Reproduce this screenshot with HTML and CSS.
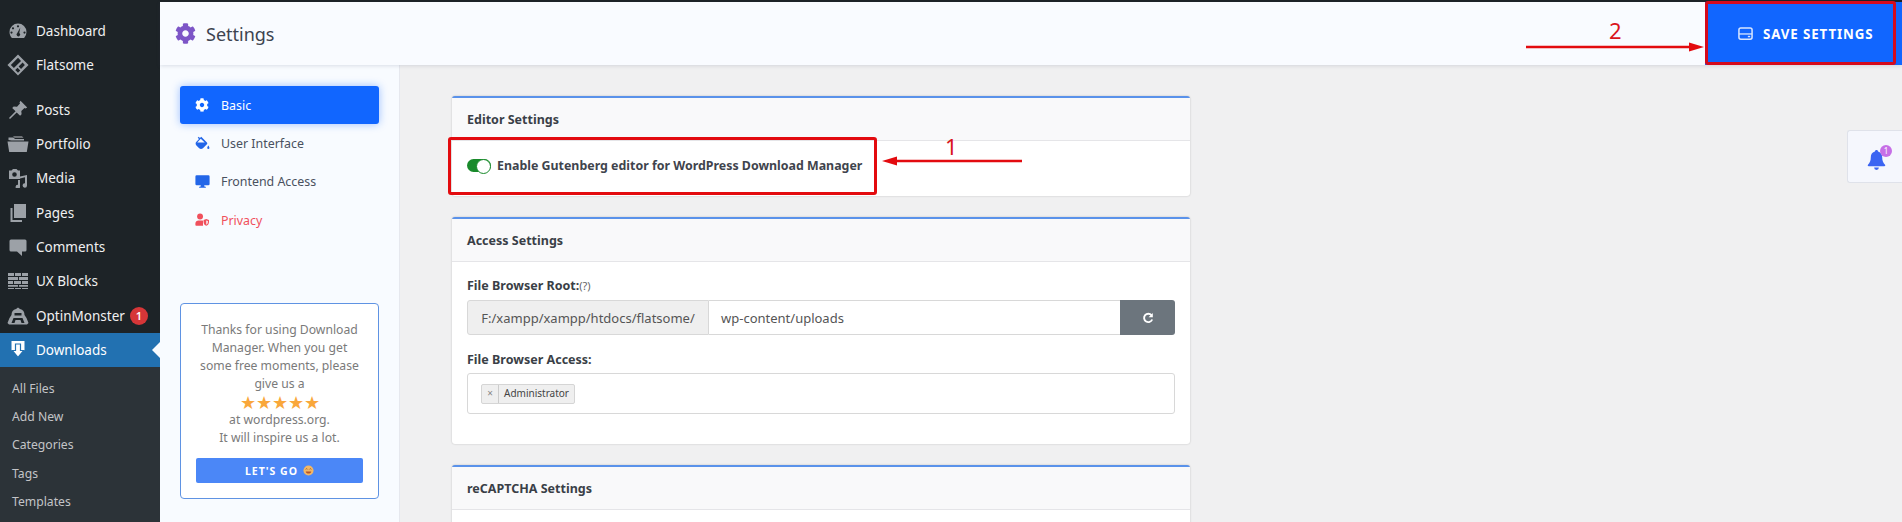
FILE: index.html
```html
<!DOCTYPE html>
<html lang="en">
<head>
<meta charset="utf-8">
<title>Settings</title>
<link rel="stylesheet" href="styles.css">
</head>
<body>
<svg class="sprites" aria-hidden="true">
  <symbol id="cog" viewBox="0 0 512 512"><path d="M487.4 315.7l-42.6-24.6c4.3-23.2 4.3-47 0-70.2l42.6-24.6c4.9-2.8 7.1-8.6 5.5-14-11.1-35.6-30-67.8-54.7-94.6-3.8-4.1-10-5.1-14.8-2.3L380.8 110c-17.9-15.4-38.5-27.3-60.8-35.1V25.8c0-5.6-3.9-10.5-9.4-11.7-36.7-8.2-74.3-7.8-109.2 0-5.5 1.2-9.4 6.1-9.4 11.7V75c-22.2 7.9-42.8 19.8-60.8 35.1L88.7 85.5c-4.9-2.8-11-1.9-14.8 2.3-24.7 26.7-43.6 58.9-54.7 94.6-1.7 5.4.6 11.2 5.5 14L67.3 221c-4.3 23.2-4.3 47 0 70.2l-42.6 24.6c-4.9 2.8-7.1 8.6-5.5 14 11.1 35.6 30 67.8 54.7 94.6 3.8 4.1 10 5.1 14.8 2.3l42.6-24.6c17.9 15.4 38.5 27.3 60.8 35.1v49.2c0 5.6 3.9 10.5 9.4 11.7 36.7 8.2 74.3 7.8 109.2 0 5.5-1.2 9.4-6.1 9.4-11.7v-49.2c22.2-7.9 42.8-19.8 60.8-35.1l42.6 24.6c4.9 2.8 11 1.9 14.8-2.3 24.7-26.7 43.6-58.9 54.7-94.6 1.5-5.5-.7-11.3-5.6-14.1zM256 336c-44.1 0-80-35.9-80-80s35.9-80 80-80 80 35.9 80 80-35.9 80-80 80z"/></symbol>
</svg>

<div class="topline"></div>
<div class="page">
  <nav class="adminmenu">
    <a class="menu-item"><svg class="menu-icon" viewBox="0 0 20 20"><path fill-rule="evenodd" d="M10 2.500a8.500 8.500 0 0 0-8.500 8.500c0 2.300.9 4.400 2.400 6h12.200a8.500 8.500 0 0 0 2.400-6A8.500 8.500 0 0 0 10 2.500zM10 4.200a1 1 0 1 1 0 2.200 1 1 0 0 1 0-2.200zM5 6.200a1 1 0 1 1 0 2.200 1 1 0 0 1 0-2.200zM3.500 10.500a1 1 0 1 1 0 2.200 1 1 0 0 1 0-2.200zM16.500 10.500a1 1 0 1 1 0 2.200 1 1 0 0 1 0-2.200zM12.300 6.500l-1 5.400a1.800 1.800 0 1 1-2 .1z"/></svg>Dashboard</a>
    <a class="menu-item"><svg class="menu-icon menu-icon-logo" viewBox="0 0 24 24"><path fill-rule="evenodd" d="M12 0.500L23.500 12 12 23.500 0.500 12zM12 4.200L4.200 12l3.300 3.300 7.800-7.800zM17 9.400l-4.300 4.300 2.600 2.600L19.500 12zM11.500 14.900L9 17.400 12 20.400l2.500-2.500z"/></svg>Flatsome</a>
    <div class="menu-gap"></div>
    <a class="menu-item"><svg class="menu-icon" viewBox="0 0 20 20"><path d="M12.500 0.800l6.700 6.700-1.700 1-1-.5-3.200 3 .3 3.300-1.500 1.500-3.400-3.400L2 19l-1-1 6.600-6.700-3.400-3.400 1.500-1.500 3.300.3 3-3.200-.5-1z"/></svg>Posts</a>
    <a class="menu-item"><svg class="menu-icon menu-icon-wide" viewBox="0 0 22 20"><path d="M1.500 6V3.500h5l1.500 1.500h9v1.500H4.500zM0.500 7.500h21L19.800 18H2.200z"/><path d="M6 2h9l1.500 2H7.500z" fill="#6d7175"/></svg>Portfolio</a>
    <a class="menu-item"><svg class="menu-icon" viewBox="0 0 20 20"><path fill-rule="evenodd" d="M1 2.500h2.500L5 1h3.500L10 2.500h2V11H1zM6.500 4.200a2.300 2.300 0 1 0 0 4.600 2.300 2.300 0 0 0 0-4.600z"/><path d="M19 7v10.500a2.200 2.200 0 1 1-2-2.200V9.200l-5 1.200V19a2.200 2.200 0 1 1-2-2.200V12h2V8.500z"/></svg>Media</a>
    <a class="menu-item"><svg class="menu-icon" viewBox="0 0 20 20"><path d="M6 1h12v14H6z"/><path d="M2.500 5H4.500v12h9.500v2H2.500z"/></svg>Pages</a>
    <a class="menu-item"><svg class="menu-icon" viewBox="0 0 20 20"><path d="M3 2.500h14a1.500 1.500 0 0 1 1.500 1.500v9a1.500 1.500 0 0 1-1.500 1.500h-3V19l-5-4.500H3A1.500 1.500 0 0 1 1.500 13V4A1.500 1.500 0 0 1 3 2.500z"/></svg>Comments</a>
    <a class="menu-item"><svg class="menu-icon menu-icon-wide" viewBox="0 0 22 18"><path d="M1 1h6v3H1zM8 1h6v3H8zM15 1h6v3h-6zM1 5h10v3H1zM12 5h9v3h-9zM1 9h5v3H1zM7 9h7v3H7zM15 9h6v3h-6zM1 13h10v1.800H1zM12 13h9v1.800h-9zM1 16h6v1H1zM8 16h6v1H8zM15 16h6v1h-6z"/></svg>UX Blocks</a>
    <a class="menu-item"><svg class="menu-icon menu-icon-wide" viewBox="0 0 22 20"><path fill-rule="evenodd" d="M11 1.500l2 1.500c3 .5 4.500 3 4.500 6l2 3 2 5-1.500 1.500H2l-1.500-1.500 2-5 2-3c0-3 1.500-5.500 4.500-6zM7.500 7v2.500h7V7zM6.500 12l-2 5h3l1-3h5l1 3h3l-2-5z"/></svg>OptinMonster<span class="count">1</span></a>
    <a class="menu-item is-current"><svg class="menu-icon" viewBox="0 0 20 20"><path d="M3.500 1h13v9.500h-13z"/><path d="M7.500 4h5v6.500h3.300L10 17.500 4.200 10.500h3.300z" stroke="#2271b1" stroke-width="1.200"/></svg>Downloads</a>
    <div class="submenu">
      <a>All Files</a>
      <a>Add New</a>
      <a>Categories</a>
      <a>Tags</a>
      <a>Templates</a>
    </div>
  </nav>

  <div class="workspace">
    <header class="topbar">
      <h1 class="page-title"><svg class="title-icon"><use href="#cog"/></svg>Settings</h1>
      <button class="save-button">
        <svg class="save-icon" viewBox="0 0 16 16"><rect x="1" y="2" width="14" height="12" rx="2" fill="none" stroke="currentColor" stroke-width="1.600"/><path d="M1 8.500h14" stroke="currentColor" stroke-width="1.400"/><path d="M10.500 10.500h2.500v1.500h-2.500z" fill="currentColor"/></svg>
        SAVE SETTINGS
      </button>
    </header>

    <div class="columns">
      <aside class="side-panel">
        <ul class="tabs">
          <li class="tab is-active"><svg class="tab-icon"><use href="#cog"/></svg>Basic</li>
          <li class="tab"><svg class="tab-icon tab-blue" viewBox="0 0 18 18"><path fill-rule="evenodd" d="M4.500 0.800l1.400 1.500L7.500 1l6.800 6.800c.6.600.6 1.400 0 2l-4.800 4.800c-1.300 1.200-3.300 1.200-4.500 0L1.700 11.300c-1.300-1.200-1.300-3.200 0-4.400L4.800 3.700 3.300 2.100zM6.900 3.400L2.700 7.700h9z"/><path d="M16 11.500c.6 1 1.300 1.800 1.300 2.800a1.300 1.300 0 0 1-2.600 0c0-1 .7-1.800 1.300-2.800z"/></svg>User Interface</li>
          <li class="tab"><svg class="tab-icon tab-blue" viewBox="0 0 18 18"><path d="M2 1.500h14a1.500 1.500 0 0 1 1.500 1.500V12a1.500 1.500 0 0 1-1.500 1.500H11l.5 1.700h1.500V16.500H5v-1.300h1.500l.5-1.700H2A1.500 1.500 0 0 1 .5 12V3A1.500 1.500 0 0 1 2 1.500z"/></svg>Frontend Access</li>
          <li class="tab tab-danger"><svg class="tab-icon" viewBox="0 0 18 18"><circle cx="6.500" cy="4.500" r="3.800"/><path d="M0.500 15.500v-2c0-2.500 2-4 4-4h4c.7 0 1.300.1 1.800.4V15.500c0 .4.100.7.300 1H1.500c-.6 0-1-.4-1-1z"/><path fill-rule="evenodd" d="M14.500 7.800l3.500 1.300v2.400c0 2.500-1.500 4.200-3.500 5-2-.8-3.500-2.500-3.500-5V9.100zM14.500 9.500v5.500c1.200-.6 2-1.800 2-3.500v-1.300z"/></svg>Privacy</li>
        </ul>
        <div class="promo">
          <p>Thanks for using Download Manager. When you get some free moments, please give us a <span class="stars">★★★★★</span> at wordpress.org.<br>It will inspire us a lot.</p>
          <a class="promo-button">LET'S GO
            <svg class="smile" viewBox="0 0 12 12"><circle cx="6" cy="6" r="5.500" fill="#f3b765"/><path d="M2.800 4.800c.5-1 1.700-1 2.200 0M7 4.800c.5-1 1.700-1 2.200 0" fill="none" stroke="#8a5a2a" stroke-width=".8"/><path d="M3 7h6c-.3 3-5.700 3-6 0z" fill="#b5542a"/></svg>
          </a>
        </div>
      </aside>

      <main class="content">
        <section class="card">
          <h2 class="card-head">Editor Settings</h2>
          <div class="card-body card-body-toggle">
            <label class="toggle-row"><span class="toggle"></span>Enable Gutenberg editor for WordPress Download Manager</label>
          </div>
        </section>

        <section class="card">
          <h2 class="card-head">Access Settings</h2>
          <div class="card-body">
            <div class="field-label">File Browser Root:<span class="hint">(?)</span></div>
            <div class="input-group">
              <span class="addon">F:/xampp/xampp/htdocs/flatsome/</span>
              <span class="input">wp-content/uploads</span>
              <span class="refresh"><svg viewBox="0 0 12 12" width="12" height="12"><path d="M9.500 3.200A4.200 4.200 0 1 0 10.200 7.500" fill="none" stroke="#fff" stroke-width="1.900"/><path d="M10.800 1v4.200H6.600z" fill="#fff"/></svg></span>
            </div>
            <div class="field-label field-label-second">File Browser Access:</div>
            <div class="select-box">
              <span class="chip"><span class="chip-x">×</span><span class="chip-text">Administrator</span></span>
            </div>
          </div>
        </section>

        <section class="card">
          <h2 class="card-head">reCAPTCHA Settings</h2>
          <div class="card-body"></div>
        </section>
      </main>
    </div>
  </div>
</div>

<aside class="notify">
  <svg class="bell" viewBox="0 0 20 22"><path d="M10 1c1 0 1.600.7 1.700 1.700C15 3.600 16 6.200 16 9c0 3.500 1 5.500 3 7.500.5.600.2 1.500-.8 1.500H1.800c-1 0-1.300-.9-.8-1.500C3 14.500 4 12.500 4 9c0-2.800 1-5.400 4.300-6.300C8.400 1.700 9 1 10 1z"/><path d="M7.500 19.500h5a2.500 2.500 0 0 1-5 0z"/></svg>
  <span class="notify-badge">1</span>
</aside>

<!-- Callouts drawn on top of the page -->
<svg class="callouts" width="1902" height="522" viewBox="0 0 1902 522">
  <rect x="449.500" y="138.500" width="426" height="55" rx="1.500" fill="none" stroke="#e30b0f" stroke-width="3"/>
  <path d="M896 161h126" stroke="#e30b0f" stroke-width="2.600"/>
  <path d="M882 161l15-4.500v9z" fill="#e30b0f"/>
  <rect x="1706.500" y="2.500" width="188" height="61" rx="1.500" fill="none" stroke="#d50a1c" stroke-width="3"/>
  <path d="M1526 47h165" stroke="#e30b0f" stroke-width="2.600"/>
  <path d="M1704 47l-15-4.500v9z" fill="#e30b0f"/>
</svg>
<span class="callout-number callout-one">1</span>
<span class="callout-number callout-two">2</span>
</body>
</html>
```

FILE: styles.css
```css
* { box-sizing: border-box; }

html, body {
  margin: 0;
  height: 522px;
  overflow: hidden;
}

body {
  position: relative;
  background: #f0f0f1;
  font-family: "Noto Sans", "Open Sans", sans-serif;
  color: #3c434a;
}

.sprites { display: none; }

.topline { height: 2px; background: #1d2327; }

.page { display: flex; height: 520px; }

/* Admin menu */
.adminmenu {
  width: 160px;
  flex: none;
  background: #1d2327;
  padding-top: 12px;
  overflow: hidden;
}

.menu-item {
  display: flex;
  align-items: center;
  height: 34.300px;
  color: #f0f0f1;
  font-size: 13.500px;
}

.menu-gap { height: 10px; }

.menu-icon {
  width: 20px;
  height: 20px;
  margin: 0 8px 0 8px;
  flex: none;
  fill: #9ca1a7;
}

.menu-icon-wide { width: 22px; margin: 0 7px; }

.menu-icon-logo { width: 22px; height: 22px; margin: 0 7px; }

.count {
  width: 18px;
  height: 18px;
  margin-left: 5px;
  border-radius: 50%;
  background: #d63638;
  color: #fff;
  font-size: 11px;
  font-weight: 600;
  text-align: center;
  line-height: 18px;
}

.is-current { background: #2271b1; color: #fff; position: relative; }
.is-current .menu-icon { fill: #fff; }
.is-current::after {
  content: "";
  position: absolute;
  right: 0;
  top: 9px;
  border: 8px solid transparent;
  border-right-color: #f8fbff;
  border-left-width: 0;
}

.submenu {
  background: #2c3338;
  padding-top: 8px;
  height: 170px;
}

.submenu a {
  display: block;
  height: 28.250px;
  line-height: 28px;
  padding-left: 12px;
  font-size: 12.200px;
  color: #c3c4c7;
}

/* Workspace */
.workspace {
  flex: 1;
  display: flex;
  flex-direction: column;
  min-width: 0;
}

.topbar {
  height: 63px;
  flex: none;
  display: flex;
  justify-content: space-between;
  align-items: stretch;
  background: #f9fbff;
  box-shadow: 0 1px 4px rgba(60, 70, 100, 0.16);
  position: relative;
}

.page-title {
  margin: 0;
  padding-left: 15px;
  display: flex;
  align-items: center;
  font-size: 18px;
  font-weight: 400;
  color: #3d4350;
}

.title-icon {
  width: 21px;
  height: 21px;
  margin-right: 10px;
  fill: #7d55c7;
}

.save-button {
  width: 197px;
  border: 0;
  padding: 0 0 0 33px;
  display: flex;
  align-items: center;
  gap: 10px;
  background: #1166ff;
  color: #fff;
  font: 700 13.300px "Noto Sans", sans-serif;
  letter-spacing: 0.9px;
}

.save-icon { width: 15px; height: 15px; color: #d8e6ff; }

.columns { flex: 1; display: flex; min-height: 0; }

/* Tabs and promo */
.side-panel {
  width: 240px;
  flex: none;
  padding: 21px 20px 0;
  background: #f8fbff;
  border-right: 1px solid #e6e8ee;
}

.tabs {
  list-style: none;
  margin: 0;
  padding: 0;
}

.tab {
  display: flex;
  align-items: center;
  height: 38.300px;
  padding-left: 15px;
  border-radius: 3px;
  font-size: 12.400px;
  color: #4a5160;
}

.tab-icon {
  width: 14px;
  height: 14px;
  margin-right: 12px;
  flex: none;
}

.tab-blue { fill: #2366e8; width: 15px; height: 15px; margin-right: 11px; }

.is-active {
  background: #1166ff;
  color: #fff;
  box-shadow: 0 0 8px rgba(17, 102, 255, 0.4);
}
.is-active .tab-icon { fill: #fff; }

.tab-danger { color: #f0505c; fill: #f0505c; }

.promo {
  margin-top: 64px;
  height: 196px;
  padding: 17px 15px 0;
  border: 1px solid #5f93e3;
  border-radius: 4px;
  background: #fff;
  text-align: center;
}

.promo p {
  margin: 0;
  font-size: 12.200px;
  line-height: 18px;
  color: #7a7a7a;
}

.stars {
  display: block;
  color: #f9a73b;
  font-size: 17.500px;
  letter-spacing: 0;
  line-height: 18px;
}

.promo-button {
  display: flex;
  align-items: center;
  justify-content: center;
  gap: 5px;
  height: 25px;
  margin-top: 11px;
  border-radius: 2px;
  background: #4b87f7;
  color: #fff;
  font-size: 10.500px;
  font-weight: 700;
  letter-spacing: 1px;
}

.smile { width: 11px; height: 11px; }

/* Settings cards */
.content {
  flex: 1;
  padding: 31px 0 0 52px;
  overflow: hidden;
}

.card {
  width: 738px;
  margin-bottom: 21px;
  background: #fff;
  border-top: 2px solid #5a92ea;
  border-radius: 3px;
  box-shadow: 0 0 2px rgba(0, 0, 0, 0.22);
}

.card-head {
  margin: 0;
  height: 43px;
  padding-left: 15px;
  display: flex;
  align-items: center;
  background: #f9f9fa;
  border-bottom: 1px solid #e5e5e8;
  font-size: 12.500px;
  font-weight: 700;
  color: #3a3f47;
}

.card-body { padding: 15px 15px 30px; }

.card-body-toggle { height: 55px; padding: 0 15px 6px; display: flex; align-items: center; }

.toggle-row {
  display: flex;
  align-items: center;
  gap: 6px;
  font-size: 12.400px;
  font-weight: 700;
  color: #3f444d;
}

.toggle {
  position: relative;
  width: 24px;
  height: 13px;
  border-radius: 7px;
  background: #198a2b;
}

.toggle::after {
  content: "";
  position: absolute;
  right: 0;
  top: 0;
  width: 13px;
  height: 13px;
  border: 1px solid #198a2b;
  border-radius: 50%;
  background: #fff;
}

.field-label {
  font-size: 12.500px;
  font-weight: 700;
  line-height: 18px;
  color: #3a3f47;
}

.hint { font-weight: 400; font-size: 11px; color: #666; }

.field-label-second { margin-top: 16px; }

.input-group {
  display: flex;
  height: 35px;
  margin-top: 5px;
  font-size: 13px;
}

.addon {
  width: 242px;
  display: flex;
  align-items: center;
  justify-content: center;
  background: #efefef;
  border: 1px solid #d8d8d8;
  border-radius: 3px 0 0 3px;
  color: #555;
}

.input {
  flex: 1;
  display: flex;
  align-items: center;
  padding-left: 12px;
  border: 1px solid #d8d8d8;
  border-left: 0;
  border-right: 0;
  color: #555;
}

.refresh {
  width: 55px;
  display: flex;
  align-items: center;
  justify-content: center;
  background: #6c757d;
  border-radius: 0 3px 3px 0;
}

.select-box {
  height: 41px;
  margin-top: 4px;
  padding: 6px 13px;
  border: 1px solid #d8d8d8;
  border-radius: 3px;
}

.chip {
  display: inline-flex;
  height: 20px;
  align-items: stretch;
  background: #efefef;
  border: 1px solid #d5d5d5;
  border-radius: 2px;
  font-size: 10px;
  color: #444;
}

.chip-x {
  width: 17px;
  text-align: center;
  line-height: 17px;
  color: #888;
  border-right: 1px solid #ccc;
}

.chip-text { padding: 0 5px; line-height: 17px; }

/* Floating notifications tab */
.notify {
  position: absolute;
  left: 1847px;
  top: 130px;
  width: 55px;
  height: 53px;
  background: #f5f7fd;
  border: 1px solid #dfe2ea;
  border-right: 0;
  border-radius: 3px 0 0 3px;
}

.bell {
  position: absolute;
  left: 19px;
  top: 18px;
  width: 19px;
  height: 21px;
  fill: #3b64f2;
}

.notify-badge {
  position: absolute;
  left: 32px;
  top: 14px;
  width: 12px;
  height: 12px;
  border-radius: 50%;
  background: #c66fe6;
  color: #fff;
  font-size: 8px;
  line-height: 12px;
  text-align: center;
}

/* Callouts */
.callouts {
  position: absolute;
  left: 0;
  top: 0;
  pointer-events: none;
}

.callout-number {
  position: absolute;
  font-size: 22px;
  line-height: 24px;
  color: #d9151c;
}

.callout-one { left: 945px; top: 134px; }
.callout-two { left: 1609px; top: 18px; }
```
